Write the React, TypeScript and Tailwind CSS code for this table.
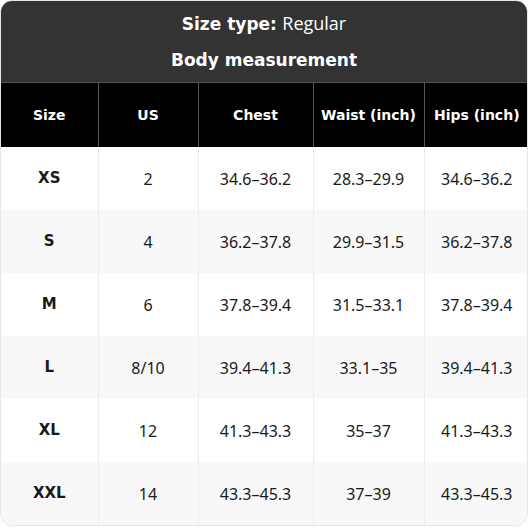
const rows = [
  ["XS", "2", "34.6–36.2", "28.3–29.9", "34.6–36.2"],
  ["S", "4", "36.2–37.8", "29.9–31.5", "36.2–37.8"],
  ["M", "6", "37.8–39.4", "31.5–33.1", "37.8–39.4"],
  ["L", "8/10", "39.4–41.3", "33.1–35", "39.4–41.3"],
  ["XL", "12", "41.3–43.3", "35–37", "41.3–43.3"],
  ["XXL", "14", "43.3–45.3", "37–39", "43.3–45.3"],
];

const headers = ["Size", "US", "Chest", "Waist (inch)", "Hips (inch)"];
const widths = ["w-[97px]", "w-[100px]", "w-[115px]", "w-[111px]", "w-[105px]"];

export default function App() {
  return (
    <div className="w-[530px] h-[530px] bg-white">
      <div className="w-[528px] rounded-[12px] overflow-hidden border border-[#e5e5e5] bg-white">
        <div className="bg-[#333333] h-[82px] flex flex-col items-center justify-center gap-[10px] text-white border-b border-[#555555] font-['DejaVu_Sans',sans-serif]">
          <p className="text-[17px] leading-[26px]">
            <span className="font-bold">Size type:</span>{" "}
            <span className="font-['Open_Sans',sans-serif] text-[18px]">Regular</span>
          </p>
          <p className="text-[17px] leading-[26px] font-bold">Body measurement</p>
        </div>
        <table className="w-full border-collapse table-fixed">
          <thead>
            <tr className="bg-black text-white h-[64px]">
              {headers.map((h, i) => (
                <th
                  key={h}
                  className={`${widths[i]} border-l first:border-l-0 border-[#555555] font-bold text-[14px] font-['DejaVu_Sans',sans-serif]`}
                >
                  {h}
                </th>
              ))}
            </tr>
          </thead>
          <tbody>
            {rows.map((r, ri) => (
              <tr
                key={r[0]}
                className={`h-[63px] ${ri % 2 === 1 ? "bg-[#f8f8f8]" : "bg-white"}`}
              >
                {r.map((c, ci) => (
                  <td
                    key={ci}
                    className={`text-center text-[#1a1a1a] border-l first:border-l-0 border-[#ececec] ${
                      ci === 0
                        ? "font-bold text-[15px] font-['DejaVu_Sans',sans-serif]"
                        : "text-[16px] font-['Noto_Sans',sans-serif]"
                    }`}
                  >
                    {c}
                  </td>
                ))}
              </tr>
            ))}
          </tbody>
        </table>
      </div>
    </div>
  );
}
